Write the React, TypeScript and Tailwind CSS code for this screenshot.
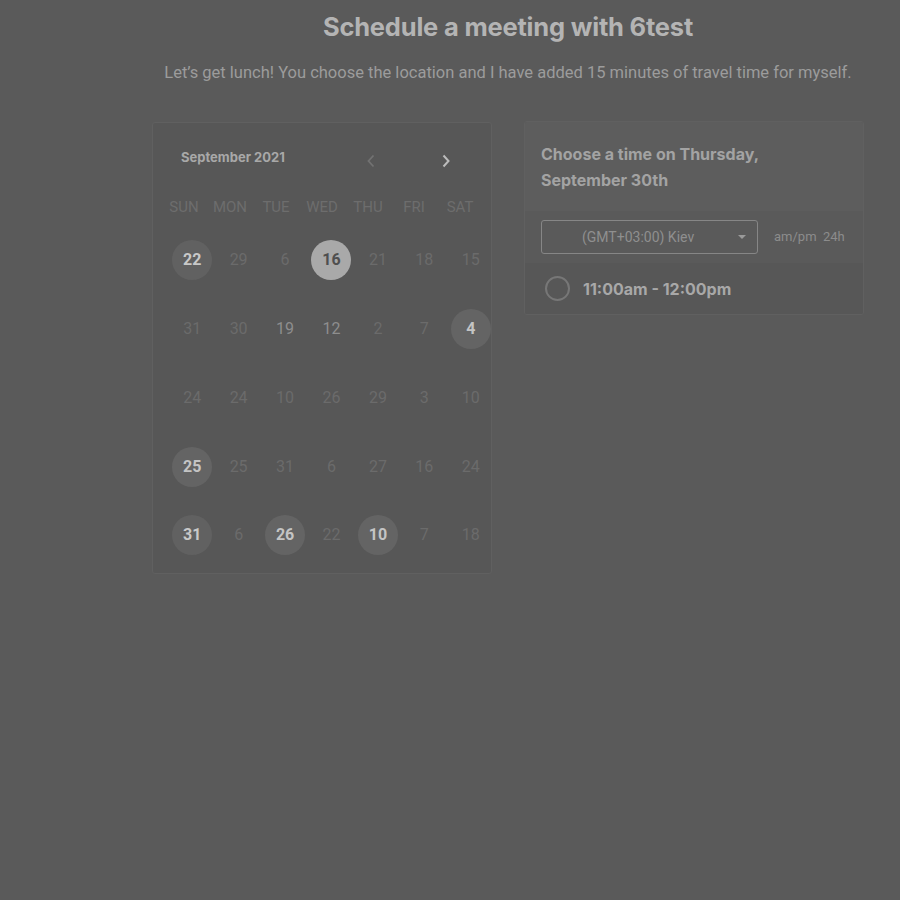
import React from "react";

type Day = { n: number; kind: "dim" | "mid" | "circle" | "selected" | "dotted" };

const rows: Day[][] = [
  [
    { n: 22, kind: "dotted" },
    { n: 29, kind: "dim" },
    { n: 6, kind: "dim" },
    { n: 16, kind: "selected" },
    { n: 21, kind: "dim" },
    { n: 18, kind: "dim" },
    { n: 15, kind: "dim" },
  ],
  [
    { n: 31, kind: "dim" },
    { n: 30, kind: "dim" },
    { n: 19, kind: "mid" },
    { n: 12, kind: "mid" },
    { n: 2, kind: "dim" },
    { n: 7, kind: "dim" },
    { n: 4, kind: "circle" },
  ],
  [
    { n: 24, kind: "dim" },
    { n: 24, kind: "dim" },
    { n: 10, kind: "dim" },
    { n: 26, kind: "dim" },
    { n: 29, kind: "dim" },
    { n: 3, kind: "dim" },
    { n: 10, kind: "dim" },
  ],
  [
    { n: 25, kind: "circle" },
    { n: 25, kind: "dim" },
    { n: 31, kind: "dim" },
    { n: 6, kind: "dim" },
    { n: 27, kind: "dim" },
    { n: 16, kind: "dim" },
    { n: 24, kind: "dim" },
  ],
  [
    { n: 31, kind: "dotted" },
    { n: 6, kind: "dim" },
    { n: 26, kind: "circle" },
    { n: 22, kind: "dim" },
    { n: 10, kind: "circle" },
    { n: 7, kind: "dim" },
    { n: 18, kind: "dim" },
  ],
];

const weekdays = ["SUN", "MON", "TUE", "WED", "THU", "FRI", "SAT"];

function DayCell({ d }: { d: Day }) {
  let cls = "";
  if (d.kind === "dim") cls = "text-[#6b6b6b]";
  else if (d.kind === "mid") cls = "text-[#8e8e8e]";
  else if (d.kind === "circle") cls = "bg-[#646464] text-[#c4c4c4] font-bold";
  else if (d.kind === "dotted") cls = "bg-[#616161] text-[#c8c8c8] font-bold";
  else cls = "bg-[#a9a9a9] text-[#4f4f4f] font-bold";
  return (
    <div className="flex h-[68.75px] items-center justify-center">
      <div className={`flex h-[40px] w-[40px] items-center justify-center rounded-full text-[16px] ${cls}`}>
        {d.n}
      </div>
    </div>
  );
}

export default function App() {
  return (
    <div
      className="h-[900px] w-[900px] overflow-hidden bg-[#5a5a5a]"
      style={{ fontFamily: "Roboto, 'Liberation Sans', sans-serif" }}
    >
      <div className="flex flex-col items-center">
        <h1
          className="mt-[11px] ml-[116px] text-[25.5px] font-bold leading-[32px] tracking-[-0.2px] text-[#b4b4b4]"
          style={{ fontFamily: "Inter, 'Liberation Sans', sans-serif" }}
        >
          Schedule a meeting with 6test
        </h1>
        <p className="mt-[20px] ml-[116px] text-[16.5px] leading-[20px] text-[#9c9c9c]">
          Let’s get lunch! You choose the location and I have added 15 minutes of travel time for myself.
        </p>
      </div>

      <div className="mt-[39px] flex items-start">
        {/* Calendar card */}
        <div className="ml-[152px] h-[452px] w-[340px] rounded-[3px] border border-[#606060] bg-[#575757]">
          <div className="flex h-[70px] items-center pl-[28px]">
            <div
              className="text-[13px] font-bold text-[#a8a8a8]"
              style={{ fontFamily: "Inter, 'Liberation Sans', sans-serif" }}
            >
              September 2021
            </div>
            <svg className="ml-[81px] mt-[6px]" width="10" height="16" viewBox="0 0 10 16">
              <path d="M7.5 2.5 L2.5 8 L7.5 13.5" fill="none" stroke="#727272" strokeWidth="1.8" />
            </svg>
            <svg className="ml-[65px] mt-[6px]" width="10" height="16" viewBox="0 0 10 16">
              <path d="M2.5 2.5 L7.5 8 L2.5 13.5" fill="none" stroke="#bcbcbc" strokeWidth="2" />
            </svg>
          </div>
          <div className="ml-[8px] grid w-[322px] grid-cols-7 text-center text-[15px] leading-[28px] text-[#6d6d6d]">
            {weekdays.map((w) => (
              <div key={w}>{w}</div>
            ))}
          </div>
          <div className="ml-[16px] mt-[5px] grid w-[325px] grid-cols-7">
            {rows.map((r, i) => r.map((d, j) => <DayCell key={`${i}-${j}`} d={d} />))}
          </div>
        </div>

        {/* Time card */}
        <div className="ml-[32px] -mt-[1px] w-[340px] overflow-hidden rounded-[3px] border border-[#606060]">
          <div
            className="h-[89px] bg-[#5d5d5d] px-[16px] pt-[19px] text-[16px] font-bold leading-[26px] text-[#a3a3a3]"
            style={{ fontFamily: "Inter, 'Liberation Sans', sans-serif" }}
          >
            Choose a time on Thursday,
            <br />
            September 30th
          </div>
          <div className="flex h-[52px] items-center bg-[#5a5a5a] pl-[16px]">
            <div className="relative flex h-[34px] w-[217px] items-center rounded-[3px] border border-[#868686] pl-[40px] text-[14px] text-[#8f8f8f]">
              (GMT+03:00) Kiev
              <svg className="absolute right-[11px] top-[14px]" width="8" height="5" viewBox="0 0 8 5">
                <path d="M0 0 L8 0 L4 4 Z" fill="#9a9a9a" />
              </svg>
            </div>
            <div className="ml-[16px] text-[13px] text-[#8c8c8c]">
              am/pm&nbsp;&nbsp;24h
            </div>
          </div>
          <div className="flex h-[51px] items-center bg-[#575757] pl-[20px]">
            <div className="h-[25px] w-[25px] rounded-full border-2 border-[#777777]" />
            <div
              className="ml-[13px] text-[16px] font-bold text-[#a8a8a8]"
              style={{ fontFamily: "Inter, 'Liberation Sans', sans-serif" }}
            >
              11:00am - 12:00pm
            </div>
          </div>
        </div>
      </div>
    </div>
  );
}
